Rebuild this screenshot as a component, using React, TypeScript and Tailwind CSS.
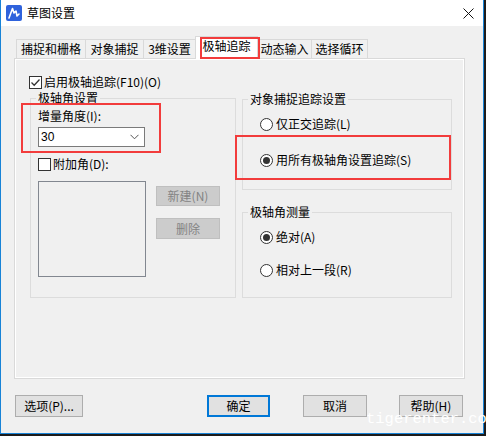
import React from "react";

function Check({ checked }: { checked?: boolean }) {
  return (
    <div className="w-[13px] h-[13px] border border-[#333333] bg-white flex items-center justify-center shrink-0">
      {checked && (
        <svg width="11" height="11" viewBox="0 0 11 11">
          <path d="M1.5 5.5 L4.2 8.2 L9.5 2.5" fill="none" stroke="#333333" strokeWidth="1.3" />
        </svg>
      )}
    </div>
  );
}

function Radio({ checked }: { checked?: boolean }) {
  return (
    <div className="w-[13px] h-[13px] rounded-full border border-[#333333] bg-white flex items-center justify-center shrink-0">
      {checked && <div className="w-[7px] h-[7px] rounded-full bg-[#333333]" />}
    </div>
  );
}

function Tab({ label, w }: { label: string; w: string }) {
  return (
    <div className={`${w} h-[19px] -ml-px first:ml-0 border-t border-l border-r border-[#d9d9d9] bg-[#f0f0f0] flex items-center justify-center whitespace-nowrap`}>
      {label}
    </div>
  );
}

export default function App() {
  return (
    <div className="min-h-screen bg-[#1c1c1c]">
      <div className="relative w-[484px] h-[434px] bg-[#f0f0f0] border-x border-b border-[#1883d7] font-['Noto_Sans_CJK_SC',sans-serif] text-[12px] leading-[16px] text-black">
        {/* title bar */}
        <div className="h-[26px] bg-white flex items-center pl-[5px] pr-[9px]">
          <svg width="16" height="16" viewBox="0 0 16 16">
            <rect x="0" y="0" width="16" height="16" rx="2" fill="#2f62dc" />
            <path d="M3 13 L6.5 3.5 L8 8 L10 6 L11 11 L13 9" fill="none" stroke="#ffffff" strokeWidth="1.6" strokeLinejoin="round" strokeLinecap="round" />
          </svg>
          <span className="ml-[5px] text-[12px] font-['Noto_Sans_CJK_SC',sans-serif]">草图设置</span>
          <svg className="ml-auto" width="11" height="11" viewBox="0 0 11 11">
            <path d="M0.5 0.5 L10.5 10.5 M10.5 0.5 L0.5 10.5" stroke="#111111" strokeWidth="1" />
          </svg>
        </div>

        {/* body */}
        <div className="pl-[13px] pt-[10px]">
          {/* tabs */}
          <div className="flex items-end h-[22px] ml-[2px]">
            <Tab label="捕捉和栅格" w="w-[70px]" />
            <Tab label="对象捕捉" w="w-[59px]" />
            <Tab label="3维设置" w="w-[53px]" />
            <div className="relative z-10 -ml-px -mb-px w-[63px] h-[23px] border-t border-l border-r border-[#d9d9d9] bg-white flex justify-center pt-[1px] whitespace-nowrap">
              极轴追踪
              <div className="absolute left-[4px] top-0 w-[60px] h-[22px] border-2 border-[#f23c3c]" />
            </div>
            <Tab label="动态输入" w="w-[55px]" />
            <Tab label="选择循环" w="w-[57px]" />
          </div>

          {/* panel */}
          <div className="w-[451px] h-[321px] border border-[#d9d9d9] shadow-[inset_1px_1px_0_#ffffff,inset_-1px_-1px_0_#ffffff] pl-[14px] pt-[15px]">
            <div className="flex items-center gap-[2px] h-[16px]">
              <Check checked />
              <span>启用极轴追踪(F10)(O)</span>
            </div>

            <div className="flex gap-[6px] ml-[1px]">
              {/* left group */}
              <div className="mt-[8px] w-[206px] border border-[#dcdcdc] pl-[7px] pb-[20px]">
                <div className="-mt-[9px] ml-[-2px] w-fit bg-[#f0f0f0] px-[2px]">极轴角设置</div>
                <div className="relative mt-[2px]">
                  <div>增量角度(I):</div>
                  <div className="mt-[3px] w-[107px] h-[20px] border border-[#7a7a7a] bg-white flex items-center pl-[2px] pr-[5px] font-['Liberation_Sans',sans-serif]">
                    <span>30</span>
                    <svg className="ml-auto" width="9" height="6" viewBox="0 0 9 6">
                      <path d="M0.5 0.8 L4.5 4.8 L8.5 0.8" fill="none" stroke="#555555" strokeWidth="1" />
                    </svg>
                  </div>
                  <div className="absolute left-[-17px] top-[-5px] w-[140px] h-[50px] border-2 border-[#f23c3c]" />
                </div>
                <div className="mt-[9px] flex items-center gap-[2px] h-[16px]">
                  <Check />
                  <span>附加角(D):</span>
                </div>
                <div className="mt-[9px] flex">
                  <div className="w-[108px] h-[96px] border border-[#828790] bg-[#f0f0f0]" />
                  <div className="ml-[10px] flex flex-col">
                    <div className="mt-[5px] w-[64px] h-[20px] border border-[#bfbfbf] bg-[#cccccc] text-[#838383] flex items-center justify-center">新建(N)</div>
                    <div className="mt-[12px] w-[64px] h-[21px] border border-[#bfbfbf] bg-[#cccccc] text-[#838383] flex items-center justify-center">删除</div>
                  </div>
                </div>
              </div>

              {/* right column */}
              <div className="w-[210px]">
                <div className="mt-[9px] border border-[#dcdcdc] pl-[17px] pb-[21px]">
                  <div className="-mt-[9px] ml-[-12px] w-fit bg-[#f0f0f0] px-[2px]">对象捕捉追踪设置</div>
                  <div className="mt-[9px] flex items-center gap-[3px] h-[16px]">
                    <Radio />
                    <span>仅正交追踪(L)</span>
                  </div>
                  <div className="relative mt-[20px] flex items-center gap-[3px] h-[16px]">
                    <Radio checked />
                    <span>用所有极轴角设置追踪(S)</span>
                    <div className="absolute left-[-25px] top-[-17px] w-[216px] h-[45px] border-2 border-[#f23c3c]" />
                  </div>
                </div>

                <div className="mt-[22px] border border-[#dcdcdc] pl-[17px] pb-[19px]">
                  <div className="-mt-[9px] ml-[-12px] w-fit bg-[#f0f0f0] px-[2px]">极轴角测量</div>
                  <div className="mt-[9px] flex items-center gap-[3px] h-[16px]">
                    <Radio checked />
                    <span>绝对(A)</span>
                  </div>
                  <div className="mt-[17px] flex items-center gap-[3px] h-[16px]">
                    <Radio />
                    <span>相对上一段(R)</span>
                  </div>
                </div>
              </div>
            </div>
          </div>

          {/* bottom buttons */}
          <div className="mt-[16px] flex">
            <div className="ml-[1px] w-[68px] h-[22px] border border-[#adadad] bg-[#e1e1e1] flex items-center justify-center">选项(P)...</div>
            <div className="ml-[124px] w-[63px] h-[22px] border-2 border-[#0078d7] bg-[#e1e1e1] flex items-center justify-center">确定</div>
            <div className="ml-[33px] w-[64px] h-[22px] border border-[#adadad] bg-[#e1e1e1] flex items-center justify-center">取消</div>
            <div className="ml-[32px] w-[64px] h-[22px] border border-[#adadad] bg-[#e1e1e1] flex items-center justify-center">帮助(H)</div>
          </div>
        </div>

        {/* watermark */}
        <div className="absolute left-[365px] top-[412px] whitespace-nowrap font-['Liberation_Mono',monospace] text-[15.5px] leading-[15px] text-white">
          tigerenter.com
        </div>
      </div>
    </div>
  );
}
